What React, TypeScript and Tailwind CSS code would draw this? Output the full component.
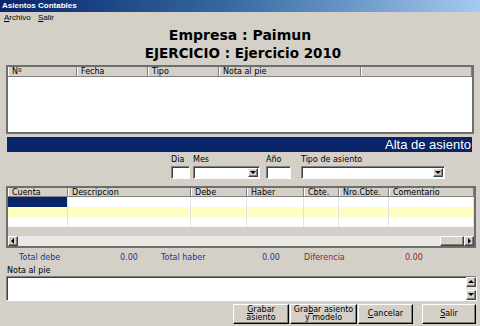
const topCols = [
  { label: 'Nº', w: 'w-[69px]' },
  { label: 'Fecha', w: 'w-[71px]' },
  { label: 'Tipo', w: 'w-[71px]' },
  { label: 'Nota al pie', w: 'w-[142px]' },
  { label: '', w: 'flex-1' },
]

const detailCols = [
  { label: 'Cuenta', w: 'w-[60px]' },
  { label: 'Descripcion', w: 'w-[123px]' },
  { label: 'Debe', w: 'w-[56px]' },
  { label: 'Haber', w: 'w-[57px]' },
  { label: 'Cbte.', w: 'w-[35px]' },
  { label: 'Nro.Cbte.', w: 'w-[50px]' },
  { label: 'Comentario', w: 'flex-1' },
]

const raised =
  'bg-[#d4d0c8] border border-t-white border-l-white border-b-[#404040] border-r-[#404040] shadow-[inset_-1px_-1px_0_#808080]'
const sunken =
  'bg-white border border-t-[#808080] border-l-[#808080] border-b-white border-r-white shadow-[inset_1px_1px_0_#404040]'

function Arrow({ dir }: { dir: 'down' | 'up' | 'left' | 'right' }) {
  const pts = {
    down: '1,2 7,2 4,5',
    up: '1,5 7,5 4,2',
    left: '5,1 5,7 2,4',
    right: '3,1 3,7 6,4',
  }[dir]
  return (
    <svg width="8" height="8" viewBox="0 0 8 8">
      <polygon points={pts} fill="#000" />
    </svg>
  )
}

function ArrowBtn({ dir, cls }: { dir: 'down' | 'up' | 'left' | 'right'; cls: string }) {
  return (
    <div className={`${raised} ${cls} flex items-center justify-center shrink-0`}>
      <Arrow dir={dir} />
    </div>
  )
}

function HeadCell({ label, w }: { label: string; w: string }) {
  return (
    <div
      className={`${w} h-full border-l border-l-white border-r border-r-[#808080] px-[3px] text-[8px] leading-[9px] whitespace-nowrap overflow-hidden`}
    >
      {label}
    </div>
  )
}

function Field({ label, w, select }: { label: string; w: string; select?: boolean }) {
  return (
    <div className={`${w} flex flex-col`}>
      <div className="h-[10px] text-[8px] leading-[10px] whitespace-nowrap">{label}</div>
      <div className={`${sunken} mt-[1px] h-[13px] flex justify-end items-center pr-[1px]`}>
        {select && <ArrowBtn dir="down" cls="w-[10px] h-[9px]" />}
      </div>
    </div>
  )
}

function Button({ children, w }: { children: React.ReactNode; w: string }) {
  return (
    <button
      className={`${raised} ${w} h-[20px] border-r-black border-b-black text-[8px] leading-[8px] text-center flex flex-col items-center justify-center`}
    >
      {children}
    </button>
  )
}

export default function App() {
  return (
    <div
      className="w-[480px] h-[326px] bg-[#d4d0c8] overflow-hidden flex flex-col text-black"
      style={{ fontFamily: '"DejaVu Sans", Verdana, sans-serif' }}
    >
      <div
        className="h-[12px] bg-gradient-to-r from-[#0a246a] via-[#3a6ea5] to-[#a6caf0] text-white font-bold text-[8px] leading-[12px] pl-[2px]"
        style={{ fontFamily: '"Liberation Sans", Arial, sans-serif' }}
      >
        Asientos Contables
      </div>
      <div
        className="h-[11px] flex text-[8px] leading-[11px] pl-[4px]"
        style={{ fontFamily: '"Liberation Sans", Arial, sans-serif' }}
      >
        <span className="w-[34px]">
          <u>A</u>rchivo
        </span>
        <span>
          <u>S</u>alir
        </span>
      </div>

      <div className="mt-[2px] h-[20px] text-center font-bold text-[14px] leading-[20px]">Empresa : Paimun</div>
      <div className="h-[16px] text-center font-bold text-[13.5px] leading-[16px] pl-[6px]">
        EJERCICIO : Ejercicio 2010
      </div>

      {/* asientos list */}
      <div className="mt-[4px] ml-[6px] w-[468px] h-[69px] border-2 border-[#6e6e6e] bg-white flex flex-col">
        <div className="h-[10px] flex bg-[#d4d0c8] border-b border-[#808080]">
          {topCols.map((c, i) => (
            <HeadCell key={i} label={c.label} w={c.w} />
          ))}
        </div>
      </div>

      <div
        className="mt-[3px] ml-[7px] w-[465px] h-[15px] bg-[#0a246a] text-white text-right text-[13px] leading-[15px] pr-[1px]"
        style={{ fontFamily: '"Liberation Sans", Arial, sans-serif' }}
      >
        Alta de asiento
      </div>

      <div className="mt-[3px] ml-[171px] flex">
        <Field label="Dia" w="w-[19px]" />
        <div className="ml-[3px]">
          <Field label="Mes" w="w-[67px]" select />
        </div>
        <div className="ml-[6px]">
          <Field label="Año" w="w-[25px]" />
        </div>
        <div className="ml-[10px]">
          <Field label="Tipo de asiento" w="w-[144px]" select />
        </div>
      </div>

      {/* detail grid */}
      <div className="mt-[7px] ml-[6px] w-[470px] h-[62px] border-2 border-[#6e6e6e] bg-[#d4d0c8] flex flex-col">
        <div className="h-[9px] flex border-b border-[#808080]">
          {detailCols.map((c, i) => (
            <HeadCell key={i} label={c.label} w={c.w} />
          ))}
        </div>
        {['bg-white', 'bg-[#ffffc4]', 'bg-white'].map((bg, r) => (
          <div key={r} className={`h-[10px] flex ${bg}`}>
            {detailCols.map((c, i) => (
              <div
                key={i}
                className={`${c.w} h-full border-r border-[#e2e2e2] ${r === 0 && i === 0 ? 'bg-[#0a246a]' : ''}`}
              />
            ))}
          </div>
        ))}
        <div className="flex-1" />
        <div className="h-[10px] flex bg-[#ebe9e4]">
          <ArrowBtn dir="left" cls="w-[10px] h-full" />
          <div className="flex-1" />
          <div className={`${raised} w-[24px] h-full`} />
          <ArrowBtn dir="right" cls="w-[10px] h-full" />
        </div>
      </div>

      <div className="mt-[5px] h-[10px] flex text-[8px] leading-[10px] pl-[19px] whitespace-nowrap">
        <span className="w-[101px] text-[#26358f]">Total debe</span>
        <span className="w-[41px] text-[#26358f]">0.00</span>
        <span className="w-[101px] text-[#26358f]">Total haber</span>
        <span className="w-[42px] text-[#26358f]">0.00</span>
        <span className="w-[101px] text-[#931c2c]">Diferencia</span>
        <span className="text-[#931c2c]">0.00</span>
      </div>

      <div className="mt-[3px] h-[10px] pl-[7px] text-[8px] leading-[10px]">Nota al pie</div>
      <div className={`${sunken} ml-[6px] w-[471px] h-[25px] flex justify-end`}>
        <div className="w-[10px] h-full flex flex-col justify-between bg-[#ebe9e4]">
          <ArrowBtn dir="up" cls="w-[10px] h-[10px]" />
          <ArrowBtn dir="down" cls="w-[10px] h-[10px]" />
        </div>
      </div>

      <div className="mt-[3px] ml-[233px] flex">
        <Button w="w-[56px]">
          <span>
            <u>G</u>rabar
          </span>
          <span>asiento</span>
        </Button>
        <div className="ml-[1px]">
          <Button w="w-[67px]">
            <span>
              Gra<u>b</u>ar asiento
            </span>
            <span>y modelo</span>
          </Button>
        </div>
        <div className="ml-[1px]">
          <Button w="w-[55px]">
            <span>
              <u>C</u>ancelar
            </span>
          </Button>
        </div>
        <div className="ml-[9px]">
          <Button w="w-[54px]">
            <span>
              <u>S</u>alir
            </span>
          </Button>
        </div>
      </div>
    </div>
  )
}
